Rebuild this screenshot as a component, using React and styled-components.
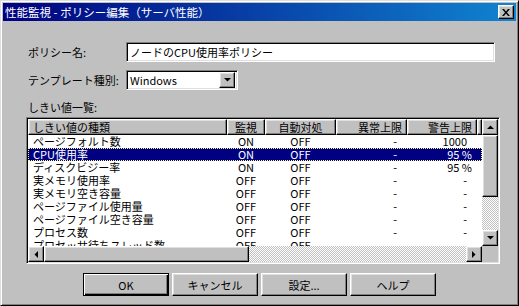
import React from "react";
import styled, { createGlobalStyle, css } from "styled-components";

const GlobalStyle = createGlobalStyle`
  html, body {
    margin: 0;
    padding: 0;
    background: #c0c0c0;
  }

  body {
    font-family: "Noto Sans CJK JP", "Liberation Sans", sans-serif;
    font-size: 11px;
    color: #000;
  }

  * {
    box-sizing: border-box;
  }
`;

const raised = css`
  border: 1px solid;
  border-color: #fff #000 #000 #fff;
  box-shadow: inset -1px -1px #808080, inset 1px 1px #dfdfdf;
`;

const sunken = css`
  border: 1px solid;
  border-color: #808080 #fff #fff #808080;
  box-shadow: inset 1px 1px #000, inset -1px -1px #dfdfdf;
`;

const checker = css`
  background: repeating-conic-gradient(#c0c0c0 0 25%, #fff 0 50%) 0 0 / 2px 2px;
`;

const Window = styled.div`
  width: 519px;
  height: 306px;
  background: #c0c0c0;
  border: 1px solid;
  border-color: #dfdfdf #000 #000 #dfdfdf;
  box-shadow: inset 1px 1px #fff, inset -1px -1px #808080;
  padding: 2px;
  display: flex;
  flex-direction: column;
`;

const TitleBar = styled.div`
  height: 18px;
  flex: none;
  display: flex;
  align-items: center;
  justify-content: space-between;
  padding-left: 2px;
  background: linear-gradient(90deg, #000080, #1084d0);
  color: #fff;
  font-size: 11.5px;
  line-height: 16px;
  white-space: nowrap;
`;

const CloseButton = styled.div`
  ${raised};
  width: 16px;
  height: 14px;
  margin-right: 2px;
  background: #c0c0c0;
  display: flex;
  align-items: center;
  justify-content: center;
`;

const Body = styled.div`
  flex: 1;
  display: flex;
  flex-direction: column;
  padding: 21px 0 0 23px;
`;

const FormRow = styled.div`
  display: grid;
  grid-template-columns: 100px auto;
  align-items: center;
  margin-top: ${props => props.$gap || 0}px;
`;

const Label = styled.div`
  padding-left: 2px;
  line-height: 16px;
  white-space: nowrap;
`;

const TextBox = styled.div`
  ${sunken};
  background: #fff;
  width: ${props => props.$width}px;
  height: 20px;
  padding: 0 3px;
  display: flex;
  align-items: center;
  white-space: nowrap;
`;

const Select = styled(TextBox)`
  padding: 2px 2px 2px 3px;
  justify-content: space-between;
`;

const DropButton = styled.div`
  ${raised};
  width: 16px;
  height: 16px;
  background: #c0c0c0;
  display: flex;
  align-items: center;
  justify-content: center;
`;

const SectionLabel = styled(Label)`
  margin-top: 9px;
  height: 16px;
`;

const ListBox = styled.div`
  ${sunken};
  margin-top: 2px;
  width: 474px;
  height: 147px;
  padding: 1px;
  display: grid;
  grid-template-columns: 454px 16px;
  grid-template-rows: 127px 16px;
  background: #c0c0c0;
`;

const View = styled.div`
  background: #fff;
  overflow: hidden;
`;

const COLS = "199px 38px 71px 71px 70px 5px";

const HeaderRow = styled.div`
  display: grid;
  grid-template-columns: ${COLS};
  height: 16px;
`;

const HeaderCell = styled.div`
  ${raised};
  background: #c0c0c0;
  height: 16px;
  line-height: 14px;
  white-space: nowrap;
  overflow: hidden;
  text-align: ${props => props.$align || "center"};
  padding: ${props => (props.$align === "left" ? "0 0 0 4px" : props.$align === "right" ? "0 4px 0 0" : "0")};
`;

const Row = styled.div`
  display: grid;
  grid-template-columns: ${COLS};
  height: 13px;
  line-height: 13px;
  white-space: nowrap;
  background: ${props => (props.$selected ? "#000080" : "transparent")};
  color: ${props => (props.$selected ? "#fff" : "#000")};
  outline: ${props => (props.$selected ? "1px dotted #ffff80" : "none")};
  outline-offset: -1px;
`;

const Cell = styled.div`
  overflow: hidden;
  text-align: ${props => props.$align || "center"};
  padding: ${props => (props.$align === "left" ? "0 0 0 5px" : props.$align === "right" ? `0 ${props.$unit ? 5 : 10}px 0 0` : "0")};
`;

const VScroll = styled.div`
  ${checker};
  display: flex;
  flex-direction: column;
`;

const HScroll = styled.div`
  ${checker};
  display: flex;
`;

const Corner = styled.div`
  background: #c0c0c0;
`;

const ScrollButton = styled.div`
  ${raised};
  flex: none;
  width: 16px;
  height: 16px;
  background: #c0c0c0;
  display: flex;
  align-items: center;
  justify-content: center;
`;

const Thumb = styled.div`
  ${raised};
  flex: none;
  background: #c0c0c0;
  width: ${props => props.$w}px;
  height: ${props => props.$h}px;
`;

const Spacer = styled.div`
  flex: 1;
`;

const ButtonBar = styled.div`
  display: flex;
  justify-content: center;
  gap: 3px;
  margin: 9px 0 0 -23px;
`;

const Button = styled.div`
  width: 86px;
  height: 23px;
  background: #c0c0c0;
  display: flex;
  align-items: center;
  justify-content: center;
  white-space: nowrap;
  ${props =>
    props.$default
      ? css`
          border: 1px solid #000;
          box-shadow: inset 1px 1px #fff, inset -1px -1px #000, inset -2px -2px #808080;
        `
      : css`
          ${raised};
        `}
`;

const Arrow = ({ dir }) => {
  const pts = {
    up: "0,4 7,4 3.5,0.5",
    down: "0,0 7,0 3.5,3.5",
    left: "4,0 4,7 0.5,3.5",
    right: "0,0 0,7 3.5,3.5",
  }[dir];
  const vertical = dir === "up" || dir === "down";
  return (
    <svg width={vertical ? 7 : 4} height={vertical ? 4 : 7} viewBox={vertical ? "0 0 7 4" : "0 0 4 7"}>
      <polygon points={pts} fill="#000" />
    </svg>
  );
};

const rows = [
  ["ページフォルト数", "ON", "OFF", "-", "1000"],
  ["CPU使用率", "ON", "OFF", "-", "95 %"],
  ["ディスクビジー率", "ON", "OFF", "-", "95 %"],
  ["実メモリ使用率", "OFF", "OFF", "-", "-"],
  ["実メモリ空き容量", "OFF", "OFF", "-", "-"],
  ["ページファイル使用量", "OFF", "OFF", "-", "-"],
  ["ページファイル空き容量", "OFF", "OFF", "-", "-"],
  ["プロセス数", "OFF", "OFF", "-", "-"],
  ["プロセッサ待ちスレッド数", "OFF", "OFF", "-", "-"],
];

const App = () => {
  return (
    <Window>
      <GlobalStyle />
      <TitleBar>
        性能監視 - ポリシー編集（サーバ性能）
        <CloseButton>
          <svg width="8" height="7" viewBox="0 0 8 7">
            <path d="M0 0h2l2 2.5L6 0h2L5 3.5 8 7H6L4 4.5 2 7H0l3-3.5z" fill="#000" />
          </svg>
        </CloseButton>
      </TitleBar>
      <Body>
        <FormRow>
          <Label>ポリシー名:</Label>
          <TextBox $width={369}>ノードのCPU使用率ポリシー</TextBox>
        </FormRow>
        <FormRow $gap={8}>
          <Label>テンプレート種別:</Label>
          <Select $width={112}>
            Windows
            <DropButton>
              <Arrow dir="down" />
            </DropButton>
          </Select>
        </FormRow>
        <SectionLabel>しきい値一覧:</SectionLabel>
        <ListBox>
          <View>
            <HeaderRow>
              <HeaderCell $align="left">しきい値の種類</HeaderCell>
              <HeaderCell>監視</HeaderCell>
              <HeaderCell>自動対処</HeaderCell>
              <HeaderCell $align="right">異常上限</HeaderCell>
              <HeaderCell $align="right">警告上限</HeaderCell>
              <HeaderCell />
            </HeaderRow>
            {rows.map((r, i) => (
              <Row key={r[0]} $selected={i === 1}>
                <Cell $align="left">{r[0]}</Cell>
                <Cell>{r[1]}</Cell>
                <Cell>{r[2]}</Cell>
                <Cell $align="right">{r[3]}</Cell>
                <Cell $align="right" $unit={r[4].includes("%")}>{r[4]}</Cell>
                <Cell />
              </Row>
            ))}
          </View>
          <VScroll>
            <ScrollButton>
              <Arrow dir="up" />
            </ScrollButton>
            <Thumb $w={16} $h={62} />
            <Spacer />
            <ScrollButton>
              <Arrow dir="down" />
            </ScrollButton>
          </VScroll>
          <HScroll>
            <ScrollButton>
              <Arrow dir="left" />
            </ScrollButton>
            <Thumb $w={205} $h={16} />
            <Spacer />
            <ScrollButton>
              <Arrow dir="right" />
            </ScrollButton>
          </HScroll>
          <Corner />
        </ListBox>
        <ButtonBar>
          <Button $default>OK</Button>
          <Button>キャンセル</Button>
          <Button>設定...</Button>
          <Button>ヘルプ</Button>
        </ButtonBar>
      </Body>
    </Window>
  );
};

export default App;
